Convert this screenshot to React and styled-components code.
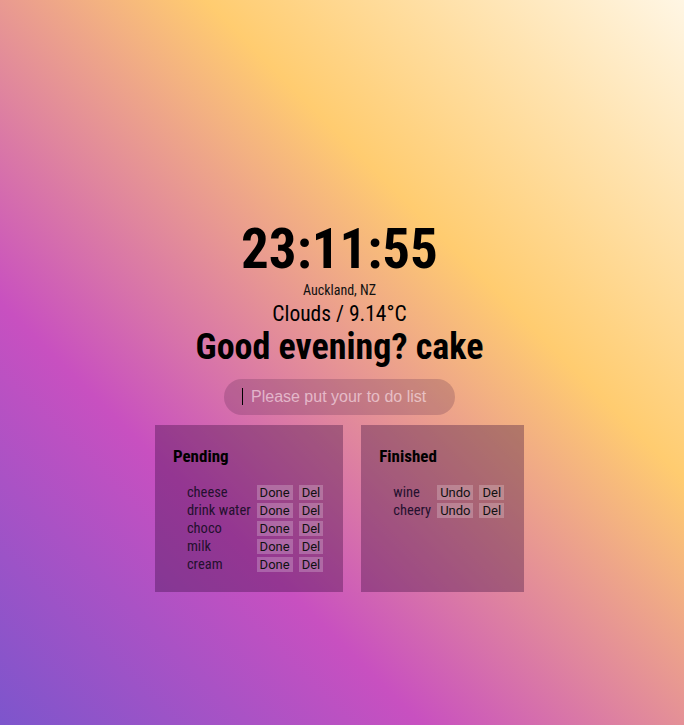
import React from "react";
import styled, { createGlobalStyle } from "styled-components";

const Global = createGlobalStyle`
  html, body { margin: 0; padding: 0; height: 100%; }
  body {
    font-family: "Roboto Condensed", "Roboto", sans-serif;
    font-stretch: condensed;
    background: linear-gradient(45deg, #7d55cc 0%, #c850c0 30%, #ffcc70 66%, #fff6e4 100%);
    background-attachment: fixed;
    min-height: 725px;
  }
`;

const Page = styled.main`
  min-height: 725px;
  display: flex;
  flex-direction: column;
  align-items: center;
  padding: 219px 5px 0 0;
  box-sizing: border-box;
`;

const Clock = styled.h1`
  margin: 0;
  font-size: 55px;
  font-weight: 700;
  line-height: 1.1;
  color: #000;
`;

const Location = styled.div`
  font-size: 14px;
  margin-top: 2px;
  color: #111;
`;

const Weather = styled.div`
  font-size: 21.5px;
  line-height: 1.2;
  margin-top: 3px;
  color: #000;
`;

const Greeting = styled.h2`
  margin: 0;
  font-size: 36px;
  font-weight: 700;
  line-height: 1.2;
  color: #000;
`;

const InputWrap = styled.div`
  position: relative;
  margin-top: 10px;
`;

const TodoInput = styled.input`
  width: 231px;
  height: 36px;
  box-sizing: border-box;
  border: none;
  outline: none;
  border-radius: 18px;
  padding: 0 16px 0 27px;
  background: rgba(60, 20, 60, 0.2);
  font-family: "Liberation Sans", Arial, sans-serif;
  font-size: 16px;
  color: #222;
  &::placeholder { color: rgba(255, 235, 245, 0.6); }
`;

const Caret = styled.span`
  position: absolute;
  left: 18px;
  top: 9px;
  width: 1px;
  height: 17px;
  background: #000;
`;

const Boards = styled.div`
  display: flex;
  gap: 18px;
  margin-top: 10px;
`;

const Card = styled.section`
  background: rgba(40, 0, 50, 0.32);
  padding: 18px 20px 18px 18px;
  min-height: 167px;
  box-sizing: border-box;
`;

const CardTitle = styled.h3`
  margin: 0;
  font-size: 17px;
  font-weight: 700;
  line-height: 26px;
  color: #000;
`;

const List = styled.ul`
  list-style: none;
  margin: 16px 0 0;
  padding: 0 0 0 14px;
  display: grid;
  grid-template-columns: auto auto auto;
  column-gap: 6px;
  row-gap: 3px;
  align-items: center;
`;

const Item = styled.li`
  display: contents;
`;

const Name = styled.span`
  font-size: 14.5px;
  line-height: 15px;
  color: #24102e;
`;

const Btn = styled.button`
  border: none;
  padding: 0 3px;
  margin: 0;
  height: 15px;
  font-family: "Roboto", sans-serif;
  font-stretch: normal;
  font-size: 13px;
  line-height: 15px;
  color: #111;
  background: rgba(255, 255, 255, 0.22);
  cursor: pointer;
  justify-self: start;
`;

const pending = ["cheese", "drink water", "choco", "milk", "cream"];
const finished = ["wine", "cheery"];

export default function App() {
  return (
    <>
      <Global />
      <Page>
        <Clock>23:11:55</Clock>
        <Location>Auckland, NZ</Location>
        <Weather>Clouds / 9.14°C</Weather>
        <Greeting>Good evening? cake</Greeting>
        <InputWrap>
          <TodoInput placeholder="Please put your to do list" />
          <Caret />
        </InputWrap>
        <Boards>
          <Card>
            <CardTitle>Pending</CardTitle>
            <List>
              {pending.map((p) => (
                <Item key={p}>
                  <Name>{p}</Name>
                  <Btn>Done</Btn>
                  <Btn>Del</Btn>
                </Item>
              ))}
            </List>
          </Card>
          <Card>
            <CardTitle>Finished</CardTitle>
            <List>
              {finished.map((p) => (
                <Item key={p}>
                  <Name>{p}</Name>
                  <Btn>Undo</Btn>
                  <Btn>Del</Btn>
                </Item>
              ))}
            </List>
          </Card>
        </Boards>
      </Page>
    </>
  );
}
